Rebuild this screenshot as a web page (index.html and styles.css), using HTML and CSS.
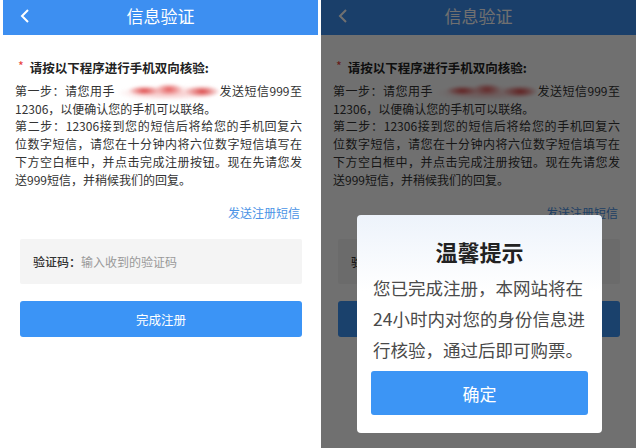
FILE: index.html
```html
<!DOCTYPE html>
<html>
<head>
    <meta charset="utf-8" />
    <title>信息验证</title>
    <link rel="stylesheet" href="styles.css">
</head>
<body>
    <div class="screens">
        <div class="phone">
            <div class="topbar">
                <svg class="back" width="10" height="14" viewBox="0 0 10 14"><polyline points="8,1 2,7 8,13" fill="none" stroke="#fff" stroke-width="2" /></svg>
                <span class="topbar-title">信息验证</span>
            </div>
            <div class="content">
                <p class="tip"><span class="star">*</span>请按以下程序进行手机双向核验:</p>
                <div class="steps">
                    <div class="ln full">第一步：请您用手<span class="blur"></span>发送短信999至</div>
                    <div class="ln">12306，以便确认您的手机可以联络。</div>
                    <div class="ln full">第二步：12306接到您的短信后将给您的手机回复六</div>
                    <div class="ln full">位数字短信，请您在十分钟内将六位数字短信填写在</div>
                    <div class="ln full">下方空白框中，并点击完成注册按钮。现在先请您发</div>
                    <div class="ln">送999短信，并稍候我们的回复。</div>
                </div>
                <div class="send"><span class="send-link">发送注册短信</span></div>
                <div class="code-box">
                    <span class="code-label">验证码：</span>
                    <span class="code-hint">输入收到的验证码</span>
                </div>
                <div class="btn">完成注册</div>
            </div>
        </div>

        <div class="phone dim">
            <div class="topbar">
                <svg class="back" width="10" height="14" viewBox="0 0 10 14"><polyline points="8,1 2,7 8,13" fill="none" stroke="#fff" stroke-width="2" /></svg>
                <span class="topbar-title">信息验证</span>
            </div>
            <div class="content">
                <p class="tip"><span class="star">*</span>请按以下程序进行手机双向核验:</p>
                <div class="steps">
                    <div class="ln full">第一步：请您用手<span class="blur"></span>发送短信999至</div>
                    <div class="ln">12306，以便确认您的手机可以联络。</div>
                    <div class="ln full">第二步：12306接到您的短信后将给您的手机回复六</div>
                    <div class="ln full">位数字短信，请您在十分钟内将六位数字短信填写在</div>
                    <div class="ln full">下方空白框中，并点击完成注册按钮。现在先请您发</div>
                    <div class="ln">送999短信，并稍候我们的回复。</div>
                </div>
                <div class="send"><span class="send-link">发送注册短信</span></div>
                <!-- hint and button label sit under the dialog here -->
                <div class="code-box">
                    <span class="code-label">验证码：</span>
                </div>
                <div class="btn"></div>
            </div>

            <div class="mask"></div>
            <div class="dialog">
                <div class="dialog-title">温馨提示</div>
                <p class="dialog-text">您已完成注册，本网站将在24小时内对您的身份信息进行核验，通过后即可购票。</p>
                <div class="dialog-btn">确定</div>
            </div>
        </div>
    </div>
</body>
</html>
```

FILE: styles.css
```css
* {
    padding: 0;
    margin: 0;
    box-sizing: border-box;
}

body {
    background: #fff;
    font-family: "Noto Sans CJK SC", "Noto Sans", sans-serif;
    color: #333;
}

.screens {
    display: flex;
    gap: 3px;
    padding-left: 3px;
    height: 448px;
}

.phone {
    position: relative;
    width: 315px;
    height: 448px;
    background: #fff;
    overflow: hidden;
}

.topbar {
    height: 35px;
    background: #3d8ff1;
    display: flex;
    align-items: center;
    justify-content: center;
    position: relative;
}

.back {
    position: absolute;
    left: 17px;
    top: 9px;
}

.topbar-title {
    color: #fff;
    font-size: 17px;
    line-height: 20px;
    margin-top: -3px;
}

.content {
    padding: 22px 16px 0 12px;
}

.tip {
    font-size: 12.5px;
    line-height: 18px;
    font-weight: bold;
    color: #222;
    padding-left: 3px;
}

.star {
    color: #e8403a;
    font-weight: normal;
    margin-right: 6px;
    vertical-align: 2px;
}

.steps {
    margin-top: 5px;
    font-size: 12px;
    line-height: 17.7px;
    color: #333;
}

.ln {
    white-space: nowrap;
}

.ln.full {
    text-align: justify;
    text-align-last: justify;
}

.blur {
    display: inline-block;
    width: 104px;
    height: 15px;
    vertical-align: -3px;
    background:
        radial-gradient(ellipse 16px 5px at 28% 45%, rgba(220, 60, 60, 0.95), transparent),
        radial-gradient(ellipse 14px 6px at 52% 35%, rgba(225, 75, 75, 0.9), transparent),
        radial-gradient(ellipse 18px 6px at 84% 50%, rgba(215, 55, 55, 0.95), transparent),
        radial-gradient(ellipse 50px 8px at 50% 60%, rgba(240, 160, 160, 0.7), transparent);
    filter: blur(1.5px);
}

.send {
    margin-top: 16px;
    padding-right: 2px;
    text-align: right;
    font-size: 12px;
    line-height: 18px;
}

.send-link {
    color: #4a93e6;
}

.code-box {
    margin: 17px 0 0 5px;
    height: 45px;
    background: #f4f4f4;
    border-radius: 2px;
    display: flex;
    align-items: center;
    padding-left: 13px;
    font-size: 12px;
}

.code-label {
    color: #333;
    font-weight: 500;
}

.code-hint {
    color: #999;
}

.btn {
    margin: 17px 0 0 5px;
    height: 36px;
    background: #3b94f6;
    border-radius: 3px;
    color: #fff;
    font-size: 12.5px;
    display: flex;
    align-items: center;
    justify-content: center;
}

.mask {
    position: absolute;
    top: 0;
    left: 0;
    right: 0;
    bottom: 0;
    background: rgba(0, 0, 0, 0.56);
}

.dialog {
    position: absolute;
    top: 215px;
    left: 36px;
    width: 245px;
    height: 218px;
    border-radius: 4px;
    background: linear-gradient(#edf3fb, #fff 35%);
    padding: 21px 14px 0 14px;
}

.dialog-title {
    text-align: center;
    font-size: 22px;
    line-height: 30px;
    font-weight: bold;
    color: #222;
}

.dialog-text {
    margin-top: 6px;
    padding-left: 2px;
    font-size: 17.5px;
    line-height: 31px;
    color: #4a4a4a;
}

.dialog-btn {
    margin-top: 6px;
    height: 44px;
    background: #3c95f5;
    border-radius: 3px;
    color: #fff;
    font-size: 17px;
    display: flex;
    align-items: center;
    justify-content: center;
}
```
